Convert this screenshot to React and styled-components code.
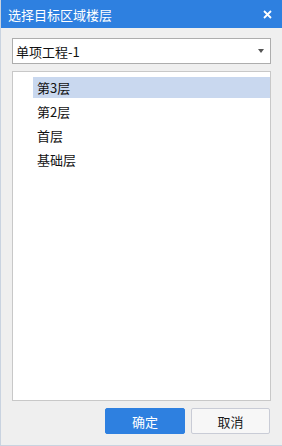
import React, { useState } from 'react';
import styled, { createGlobalStyle } from 'styled-components';

const GlobalStyle = createGlobalStyle`
    html, body {
        margin: 0;
        padding: 0;
        background: #efefef;
    }
    * {
        box-sizing: border-box;
    }
`;

const FONT = `"Microsoft YaHei", "Noto Sans CJK SC", "Noto Sans", sans-serif`;

const Window = styled.div`
    width: 282px;
    height: 446px;
    display: flex;
    flex-direction: column;
    background: #efefef;
    border-left: 1px solid #c9d3e0;
    border-bottom: 1px solid #c9d3e0;
    font-family: ${FONT};
    font-size: 13px;
    color: #1a1a1a;
`;

const TitleBar = styled.div`
    height: 28px;
    flex: none;
    display: flex;
    align-items: center;
    justify-content: space-between;
    padding: 0 9px 0 7px;
    background: #2e80e0;
    color: #fff;
    font-size: 13px;
`;

const CloseButton = styled.button`
    width: 12px;
    height: 12px;
    padding: 0;
    border: none;
    background: none;
    display: flex;
    align-items: center;
    justify-content: center;
    cursor: pointer;
`;

const Body = styled.div`
    flex: 1;
    display: flex;
    flex-direction: column;
    padding: 10px 11px 11px 11px;
    gap: 7px;
`;

const Select = styled.div`
    height: 26px;
    display: flex;
    align-items: center;
    justify-content: space-between;
    padding: 0 6px 0 3px;
    background: #fff;
    border: 1px solid #adadad;
    font-size: 13px;
    color: #111;
`;

const Caret = styled.span`
    width: 0;
    height: 0;
    border-left: 3px solid transparent;
    border-right: 3px solid transparent;
    border-top: 4px solid #555;
`;

const List = styled.div`
    flex: 1;
    display: flex;
    flex-direction: column;
    gap: 3px;
    padding: 5px 0 0 20px;
    background: #fff;
    border: 1px solid #c8c8c8;
`;

const Item = styled.div`
    height: 21px;
    display: flex;
    align-items: center;
    padding-left: 4px;
    background: ${p => (p.$active ? '#c9d8ef' : 'transparent')};
    color: #111;
    cursor: default;
`;

const Footer = styled.div`
    display: flex;
    justify-content: flex-end;
    gap: 6px;
    padding-right: 1px;
`;

const Button = styled.button`
    width: ${p => (p.$primary ? '80px' : '79px')};
    height: 26px;
    border-radius: 2px;
    border: 1px solid ${p => (p.$primary ? '#2e80e0' : '#c9ccd6')};
    background: ${p => (p.$primary ? '#2e80e0' : '#f7f7f7')};
    color: ${p => (p.$primary ? '#fff' : '#1a1a1a')};
    font-family: ${FONT};
    font-size: 13px;
    padding: 0;
    cursor: pointer;
`;

const floors = ['第3层', '第2层', '首层', '基础层'];

function App() {
    const [active, setActive] = useState(0);

    return (
        <>
            <GlobalStyle />
            <Window>
                <TitleBar>
                    <span>选择目标区域楼层</span>
                    <CloseButton>
                        <svg width="9" height="9" viewBox="0 0 9 9">
                            <path d="M1 1L8 8M8 1L1 8" stroke="#fff" strokeWidth="1.8" />
                        </svg>
                    </CloseButton>
                </TitleBar>
                <Body>
                    <Select>
                        <span>单项工程-1</span>
                        <Caret />
                    </Select>
                    <List>
                        {floors.map((f, i) => (
                            <Item key={f} $active={i === active} onClick={() => setActive(i)}>{f}</Item>
                        ))}
                    </List>
                    <Footer>
                        <Button $primary>确定</Button>
                        <Button>取消</Button>
                    </Footer>
                </Body>
            </Window>
        </>
    );
}

export default App;
